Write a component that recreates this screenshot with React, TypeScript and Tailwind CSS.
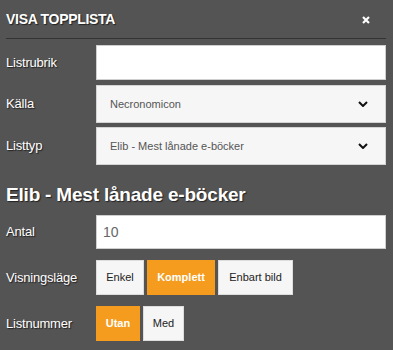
import React from "react";

const font = { fontFamily: '"Liberation Sans", Arial, sans-serif' };

const Chevron: React.FC = () => (
  <svg width="10" height="6" viewBox="0 0 10 6" className="shrink-0">
    <path d="M1 1l4 4 4-4" fill="none" stroke="#111" strokeWidth="2" />
  </svg>
);

const Label: React.FC<{ children: React.ReactNode }> = ({ children }) => (
  <div className="w-[90px] shrink-0 text-[13px] tracking-[-0.2px] text-white [text-shadow:1px_1px_1px_#222]">
    {children}
  </div>
);

const Select: React.FC<{ value: string }> = ({ value }) => (
  <div className="flex h-[38px] flex-1 items-center justify-between border border-[#d4d4d4] bg-[#f6f6f6] pl-[13px] pr-[17px] text-[11px] text-[#555]">
    <span>{value}</span>
    <Chevron />
  </div>
);

const Btn: React.FC<{ active?: boolean; children: React.ReactNode; w: string }> = ({
  active,
  children,
  w,
}) => (
  <div
    className={
      active
        ? `flex h-[35px] ${w} items-center justify-center bg-[#f59c1e] text-[11px] font-bold text-white`
        : `flex h-[35px] ${w} items-center justify-center border border-[#ddd] bg-[#f6f6f6] text-[11px] text-[#222]`
    }
  >
    {children}
  </div>
);

const App: React.FC = () => {
  return (
    <div className="h-[350px] w-[393px] overflow-hidden bg-[#545454] pl-[6px] pr-[7px]" style={font}>
      {/* Header */}
      <div className="flex h-[39px] items-center justify-between border-b border-[#333] pt-[1px]">
        <span className="text-[14px] font-bold tracking-[-0.3px] text-white [text-shadow:1px_1px_1px_#222]">
          VISA TOPPLISTA
        </span>
        <svg width="8" height="8" viewBox="0 0 8 8" className="mr-[16px]">
          <path d="M1 1l6 6M7 1l-6 6" stroke="#fff" strokeWidth="2.2" />
        </svg>
      </div>

      <div className="mt-[6px] flex items-center">
        <Label>Listrubrik</Label>
        <div className="h-[35px] flex-1 border border-[#cfcfcf] bg-white" />
      </div>
      <div className="mt-[5px] flex items-center">
        <Label>Källa</Label>
        <Select value="Necronomicon" />
      </div>
      <div className="mt-[4px] flex items-center">
        <Label>Listtyp</Label>
        <Select value="Elib - Mest lånade e-böcker" />
      </div>

      <h2 className="mt-[8px] h-[42px] text-[19px] leading-[44px] font-bold tracking-[-0.2px] text-white [text-shadow:1px_1px_1px_#222]">
        Elib - Mest lånade e-böcker
      </h2>

      <div className="flex items-center">
        <Label>Antal</Label>
        <div className="flex h-[34px] flex-1 items-center border border-[#cfcfcf] bg-white pl-[6px] text-[14px] text-[#666]">
          10
        </div>
      </div>

      <div className="mt-[11px] flex items-center">
        <Label>Visningsläge</Label>
        <div className="flex gap-[3px]">
          <Btn w="w-[48px]">Enkel</Btn>
          <Btn active w="w-[68px]">Komplett</Btn>
          <Btn w="w-[75px]">Enbart bild</Btn>
        </div>
      </div>

      <div className="mt-[11px] flex items-center">
        <Label>Listnummer</Label>
        <div className="flex gap-[3px]">
          <Btn active w="w-[44px]">Utan</Btn>
          <Btn w="w-[41px]">Med</Btn>
        </div>
      </div>
    </div>
  );
};

export default App;
